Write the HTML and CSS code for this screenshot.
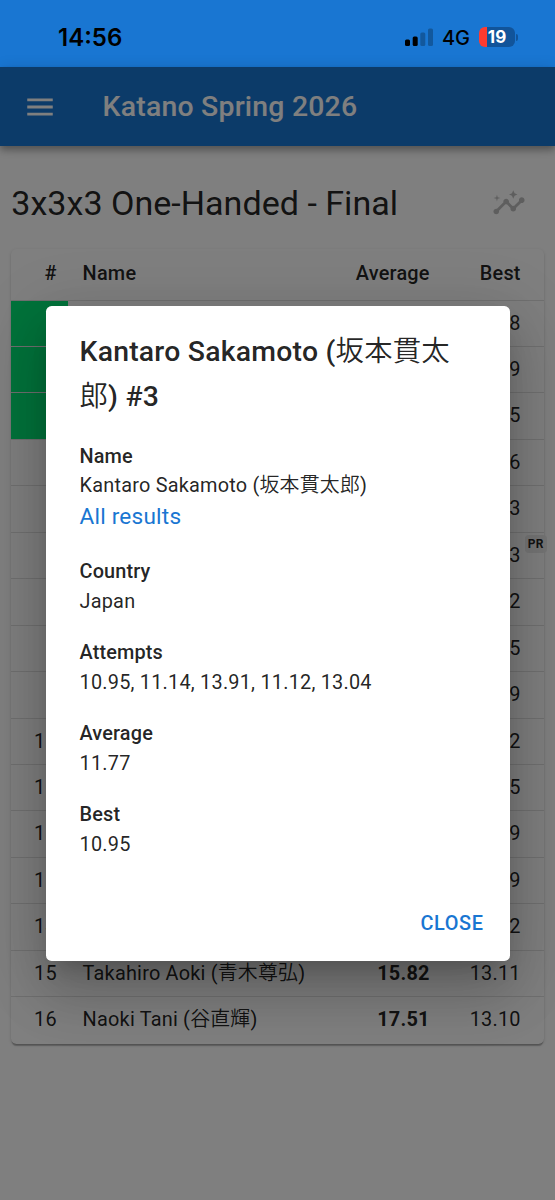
FILE: index.html
```html
<!DOCTYPE html>
<html lang="en">
<head>
    <meta charset="UTF-8">
    <meta name="viewport" content="width=device-width, initial-scale=1.0">
    <title>Katano Spring 2026</title>
    <link rel="stylesheet" href="styles.css">
</head>
<body>
    <!-- Phone status bar -->
    <div class="status-bar">
        <span class="clock">14:56</span>
        <div class="status-icons">
            <svg class="signal" width="28" height="18" viewBox="0 0 28 18">
                <rect x="0" y="11.5" width="5" height="6.5" rx="1.5"/>
                <rect x="7.7" y="8.5" width="5" height="9.5" rx="1.5"/>
                <rect class="dim" x="15.3" y="4.5" width="5" height="13.5" rx="1.5"/>
                <rect class="dim" x="23" y="0.5" width="5" height="17.5" rx="1.5"/>
            </svg>
            <span class="network">4G</span>
            <div class="battery"><span>19</span></div>
            <div class="battery-cap"></div>
        </div>
    </div>

    <div class="app">
        <header class="toolbar">
            <svg class="icon" viewBox="0 0 24 24"><path d="M3 18h18v-2H3v2zm0-5h18v-2H3v2zm0-7v2h18V6H3z"/></svg>
            <h1>Katano Spring 2026</h1>
        </header>

        <main>
            <div class="round-header">
                <h2>3x3x3 One-Handed - Final</h2>
                <svg class="icon insights" viewBox="0 0 24 24">
                    <path d="M21 8c-1.45 0-2.26 1.44-1.93 2.51l-3.55 3.56c-.3-.09-.74-.09-1.04 0l-2.55-2.55C12.27 10.45 11.46 9 10 9c-1.45 0-2.27 1.44-1.93 2.52l-4.56 4.55C2.44 15.74 1 16.55 1 18c0 1.1.9 2 2 2 1.45 0 2.26-1.44 1.93-2.51l4.55-4.56c.3.09.74.09 1.04 0l2.55 2.55C12.73 16.55 13.54 18 15 18c1.45 0 2.27-1.44 1.93-2.52l3.56-3.55C21.56 12.26 23 11.45 23 10c0-1.1-.9-2-2-2z"/>
                    <path d="M15 9l.94-2.07L18 6l-2.06-.93L15 3l-.92 2.07L12 6l2.08.93zM3.5 11L4 9l2-.5L4 8l-.5-2L3 8l-2 .5L3 9z"/>
                </svg>
            </div>

            <div class="results">
                <div class="row head"><span class="rank">#</span><span class="name">Name</span><span class="average">Average</span><span class="best">Best</span></div>
                <div class="row advancing"><span class="rank"></span><span class="name"></span><span class="average"></span><span class="best">8</span></div>
                <div class="row advancing"><span class="rank"></span><span class="name"></span><span class="average"></span><span class="best">9</span></div>
                <div class="row advancing"><span class="rank"></span><span class="name"></span><span class="average"></span><span class="best">5</span></div>
                <div class="row"><span class="rank"></span><span class="name"></span><span class="average"></span><span class="best">6</span></div>
                <div class="row"><span class="rank"></span><span class="name"></span><span class="average"></span><span class="best">3</span></div>
                <div class="row"><span class="rank"></span><span class="name"></span><span class="average"></span><span class="best">3<b class="record">PR</b></span></div>
                <div class="row"><span class="rank"></span><span class="name"></span><span class="average"></span><span class="best">2</span></div>
                <div class="row"><span class="rank"></span><span class="name"></span><span class="average"></span><span class="best">5</span></div>
                <div class="row"><span class="rank"></span><span class="name"></span><span class="average"></span><span class="best">9</span></div>
                <div class="row"><span class="rank">10</span><span class="name"></span><span class="average"></span><span class="best">2</span></div>
                <div class="row"><span class="rank">11</span><span class="name"></span><span class="average"></span><span class="best">5</span></div>
                <div class="row"><span class="rank">12</span><span class="name"></span><span class="average"></span><span class="best">9</span></div>
                <div class="row"><span class="rank">13</span><span class="name"></span><span class="average"></span><span class="best">9</span></div>
                <div class="row"><span class="rank">14</span><span class="name"></span><span class="average"></span><span class="best">2</span></div>
                <div class="row"><span class="rank">15</span><span class="name">Takahiro Aoki (<span class="ja" lang="ja">青木尊弘</span>)</span><span class="average">15.82</span><span class="best">13.11</span></div>
                <div class="row"><span class="rank">16</span><span class="name">Naoki Tani (<span class="ja" lang="ja">谷直輝</span>)</span><span class="average">17.51</span><span class="best">13.10</span></div>
            </div>
        </main>

        <!-- Result dialog -->
        <div class="backdrop">
            <div class="dialog">
                <h3>Kantaro Sakamoto (<span class="ja" lang="ja">坂本貫太郎</span>) #3</h3>
                <dl>
                    <div>
                        <dt>Name</dt>
                        <dd>Kantaro Sakamoto (<span class="ja" lang="ja">坂本貫太郎</span>)</dd>
                        <dd class="link"><a href="#">All results</a></dd>
                    </div>
                    <div>
                        <dt>Country</dt>
                        <dd>Japan</dd>
                    </div>
                    <div>
                        <dt>Attempts</dt>
                        <dd>10.95, 11.14, 13.91, 11.12, 13.04</dd>
                    </div>
                    <div>
                        <dt>Average</dt>
                        <dd>11.77</dd>
                    </div>
                    <div>
                        <dt>Best</dt>
                        <dd>10.95</dd>
                    </div>
                </dl>
                <div class="actions">
                    <button type="button">CLOSE</button>
                </div>
            </div>
        </div>
    </div>
</body>
</html>
```

FILE: styles.css
```css
* {
    box-sizing: border-box;
}

body {
    margin: 0;
    height: 1200px;
    display: flex;
    flex-direction: column;
    overflow: hidden;
    background-color: #fff;
    color: rgba(0, 0, 0, 0.87);
    font-family: Roboto, "Noto Sans CJK JP", sans-serif;
    font-size: 19.9px;
    letter-spacing: 0.01071em;
}

h1, h2, h3, dl, dd {
    margin: 0;
}

.ja {
    font-weight: 350;
}

.icon {
    width: 34px;
    height: 34px;
    fill: currentColor;
    flex-shrink: 0;
}

/* Status bar */
.status-bar {
    height: 67px;
    flex-shrink: 0;
    display: flex;
    justify-content: space-between;
    padding: 7px 37px 0 58px;
    background-color: #1976d2;
    color: #000;
    font-family: Inter, sans-serif;
    letter-spacing: 0;
}

.clock {
    line-height: 62px;
    font-size: 24px;
    font-weight: 600;
}

.status-icons {
    height: 60px;
    display: flex;
    align-items: center;
}

.signal {
    margin-right: 9px;
}

.signal .dim {
    opacity: 0.25;
}

.network {
    padding-top: 1px;
    font-size: 20px;
    font-weight: 500;
    margin-right: 9px;
}

.battery {
    width: 36px;
    height: 20px;
    border-radius: 6px;
    background: linear-gradient(to right, #ff3b30 8px, #11549a 8px);
    color: #fff;
    font-size: 17px;
    font-weight: 700;
    line-height: 20px;
    text-align: center;
}

.battery-cap {
    width: 2px;
    height: 7px;
    margin-left: 1px;
    border-radius: 0 2px 2px 0;
    background-color: #11549a;
}

/* Page */
.app {
    position: relative;
    flex: 1;
}

.toolbar {
    height: 79px;
    display: flex;
    align-items: center;
    gap: 46px;
    padding: 0 22.6px;
    background-color: #1976d2;
    color: #fff;
    box-shadow: 0 3px 6px -1px rgba(0, 0, 0, 0.2), 0 6px 7px rgba(0, 0, 0, 0.14), 0 1px 14px rgba(0, 0, 0, 0.12);
}

h1, h3 {
    font-size: 28.4px;
    font-weight: 500;
    letter-spacing: 0.0075em;
    line-height: 45.2px;
}

main {
    padding: 34px 11.3px 0;
}

.round-header {
    height: 46px;
    display: flex;
    align-items: center;
    justify-content: space-between;
    padding-right: 17.5px;
}

h2 {
    font-size: 34.1px;
    font-weight: 400;
    letter-spacing: 0;
}

.insights {
    color: rgba(0, 0, 0, 0.26);
}

.results {
    margin-top: 22.6px;
    border-radius: 5.6px;
    box-shadow: 0 3px 1px -1.4px rgba(0, 0, 0, 0.2), 0 1px 1.4px rgba(0, 0, 0, 0.14), 0 1px 4px rgba(0, 0, 0, 0.12);
}

.row {
    display: grid;
    grid-template-columns: 57px 1fr 130px 104px;
    grid-template-rows: 100%;
    height: 46.44px;
    line-height: 46px;
    border-bottom: 1.4px solid #e0e0e0;
}

.row:last-child {
    border-bottom: none;
}

.head {
    height: 52px;
    line-height: 50px;
    font-weight: 500;
}

.rank {
    padding-right: 11.5px;
    text-align: right;
}

.advancing .rank {
    background-color: #00e676;
}

.name {
    padding-left: 14.3px;
}

.average {
    padding-right: 10px;
    text-align: right;
    font-weight: 700;
}

.head .average {
    font-weight: 500;
}

.best {
    position: relative;
    padding-right: 23px;
    text-align: right;
}

.record {
    position: absolute;
    top: 2px;
    right: -3px;
    padding: 0 3px;
    border-radius: 4px;
    background-color: #ebebeb;
    font-size: 12px;
    line-height: 18px;
}

/* Dialog */
.backdrop {
    position: absolute;
    inset: 0;
    padding: 239px 45.5px 0;
    background-color: rgba(0, 0, 0, 0.5);
}

.dialog {
    height: 655px;
    display: flex;
    flex-direction: column;
    border-radius: 5.6px;
    background-color: #fff;
    box-shadow: 0 15px 21px -10px rgba(0, 0, 0, 0.2), 0 34px 54px 4px rgba(0, 0, 0, 0.14), 0 13px 65px 11px rgba(0, 0, 0, 0.12);
}

h3 {
    padding: 22.6px 34px;
}

dl {
    display: flex;
    flex-direction: column;
    gap: 22.6px;
    flex: 1;
    padding: 0 34px;
}

dt {
    font-weight: 500;
    line-height: 30.6px;
    letter-spacing: 0.00714em;
}

dd {
    line-height: 27.8px;
}

a {
    color: #1976d2;
    font-size: 22.6px;
    line-height: 34.4px;
    letter-spacing: 0.00938em;
    text-decoration: none;
}

.actions {
    display: flex;
    justify-content: flex-end;
    padding: 11.3px 12px 10.3px;
}

button {
    padding: 8px 14px;
    border: none;
    background: none;
    color: #1976d2;
    font-family: inherit;
    font-size: 19.9px;
    font-weight: 500;
    line-height: 38px;
    letter-spacing: 0.02857em;
}
```
